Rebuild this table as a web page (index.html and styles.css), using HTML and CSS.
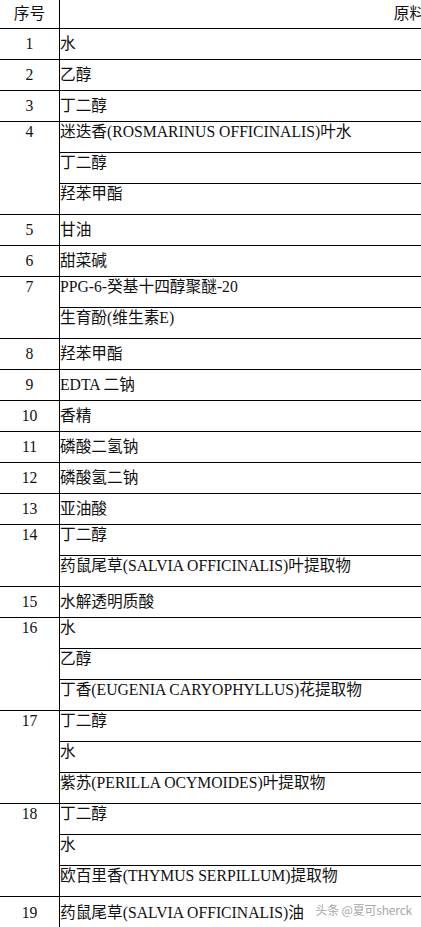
FILE: index.html
```html
<!DOCTYPE html>
<html lang="zh-CN">
<head>
<meta charset="utf-8">
<title>原料表</title>
<link rel="stylesheet" href="styles.css">
</head>
<body>
<div class="page">
<table class="sheet">
  <thead>
    <tr class="head"><th class="num">序号</th><th class="name">原料</th></tr>
  </thead>
  <tbody>
    <tr><td class="num">1</td><td class="name">水</td></tr>
    <tr><td class="num">2</td><td class="name">乙醇</td></tr>
    <tr><td class="num">3</td><td class="name">丁二醇</td></tr>
    <tr class="multi"><td class="num" rowspan="3">4</td><td class="name">迷迭香(ROSMARINUS OFFICINALIS)叶水</td></tr>
    <tr class="multi"><td class="name">丁二醇</td></tr>
    <tr class="multi"><td class="name">羟苯甲酯</td></tr>
    <tr><td class="num">5</td><td class="name">甘油</td></tr>
    <tr><td class="num">6</td><td class="name">甜菜碱</td></tr>
    <tr class="multi"><td class="num" rowspan="2">7</td><td class="name">PPG-6-癸基十四醇聚醚-20</td></tr>
    <tr class="multi"><td class="name">生育酚(维生素E)</td></tr>
    <tr><td class="num">8</td><td class="name">羟苯甲酯</td></tr>
    <tr><td class="num">9</td><td class="name">EDTA 二钠</td></tr>
    <tr><td class="num">10</td><td class="name">香精</td></tr>
    <tr><td class="num">11</td><td class="name">磷酸二氢钠</td></tr>
    <tr><td class="num">12</td><td class="name">磷酸氢二钠</td></tr>
    <tr><td class="num">13</td><td class="name">亚油酸</td></tr>
    <tr class="multi"><td class="num" rowspan="2">14</td><td class="name">丁二醇</td></tr>
    <tr class="multi"><td class="name">药鼠尾草(SALVIA OFFICINALIS)叶提取物</td></tr>
    <tr><td class="num">15</td><td class="name">水解透明质酸</td></tr>
    <tr class="multi"><td class="num" rowspan="3">16</td><td class="name">水</td></tr>
    <tr class="multi"><td class="name">乙醇</td></tr>
    <tr class="multi"><td class="name">丁香(EUGENIA CARYOPHYLLUS)花提取物</td></tr>
    <tr class="multi"><td class="num" rowspan="3">17</td><td class="name">丁二醇</td></tr>
    <tr class="multi"><td class="name">水</td></tr>
    <tr class="multi"><td class="name">紫苏(PERILLA OCYMOIDES)叶提取物</td></tr>
    <tr class="multi"><td class="num" rowspan="3">18</td><td class="name">丁二醇</td></tr>
    <tr class="multi"><td class="name">水</td></tr>
    <tr class="multi"><td class="name">欧百里香(THYMUS SERPILLUM)提取物</td></tr>
    <tr class="last"><td class="num">19</td><td class="name">药鼠尾草(SALVIA OFFICINALIS)油</td></tr>
  </tbody>
</table>
<div class="watermark">头条 @夏可sherck</div>
</div>
</body>
</html>
```

FILE: styles.css
```css
html, body {
  margin: 0;
  padding: 0;
  background: #fff;
}

.page {
  position: relative;
  width: 421px;
  height: 927px;
  overflow: hidden;
}

.sheet {
  border-collapse: separate;
  border-spacing: 0;
  width: 759px;
  table-layout: fixed;
  font-family: "Liberation Serif", "Noto Sans CJK SC", serif;
  font-size: 15.7px;
  color: #111;
}

.sheet th,
.sheet td {
  box-sizing: border-box;
  padding: 0;
  font-weight: normal;
  line-height: 18px;
  border-bottom: 1px solid #000;
  vertical-align: middle;
  white-space: nowrap;
}

.sheet .num {
  width: 60px;
  border-right: 1px solid #000;
  text-align: center;
}

.sheet .name {
  text-align: left;
  padding-left: 0;
}

.head th {
  height: 29px;
}

.head .name {
  text-align: center;
}

.sheet tbody td {
  height: 31px;
}

.sheet tr.multi td {
  vertical-align: top;
  padding-top: 1px;
}

.sheet tr.last td {
  border-bottom: none;
}

.watermark {
  position: absolute;
  right: 9px;
  bottom: 9px;
  font-family: "Noto Sans CJK SC", "Noto Sans", sans-serif;
  font-size: 12px;
  color: #a8a8a8;
  text-shadow: 0 0 2px #fff, 0 0 2px #fff;
  letter-spacing: -0.2px;
}
```
